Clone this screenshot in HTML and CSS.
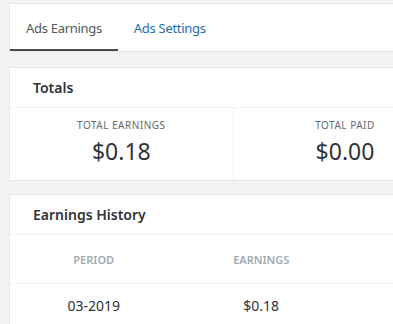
FILE: index.html
```html
<!DOCTYPE html>
<html lang="en">
<head>
    <meta charset="UTF-8">
    <meta name="viewport" content="width=device-width, initial-scale=1.0">
    <title>Ads</title>
    <link rel="stylesheet" href="styles.css">
</head>
<body>
    <div class="page">
        <nav class="tabs">
            <a class="tab is-selected" href="#">Ads Earnings</a>
            <a class="tab" href="#">Ads Settings</a>
        </nav>

        <section class="card">
            <header class="card-header">Totals</header>
            <div class="totals">
                <div class="total">
                    <div class="total-label">Total Earnings</div>
                    <div class="total-value">$0.18</div>
                </div>
                <div class="total">
                    <div class="total-label">Total Paid</div>
                    <div class="total-value">$0.00</div>
                </div>
                <div class="total"></div>
            </div>
        </section>

        <section class="card">
            <header class="card-header">Earnings History</header>
            <table class="history">
                <thead>
                    <tr>
                        <th>Period</th>
                        <th>Earnings</th>
                        <th></th>
                        <th></th>
                    </tr>
                </thead>
                <tbody>
                    <tr>
                        <td>03-2019</td>
                        <td>$0.18</td>
                        <td></td>
                        <td></td>
                    </tr>
                </tbody>
            </table>
        </section>
    </div>
</body>
</html>
```

FILE: styles.css
```css
html, body {
    overflow: hidden;
}
body {
    margin: 0;
    background: #f3f3f3;
    font-family: "Noto Sans", "Open Sans", sans-serif;
    color: #2e3338;
}
.page {
    width: 672px;
    padding: 3px 0 0 9px;
}
.tabs {
    display: flex;
    height: 47px;
    background: #fff;
    border: 1px solid #e6e6e6;
    margin-bottom: 15px;
}
.tab {
    display: flex;
    align-items: center;
    padding: 3px 16px 0;
    font-size: 13px;
    letter-spacing: -0.3px;
    color: #1f6ea8;
    text-decoration: none;
    border-bottom: 2px solid transparent;
}
.tab.is-selected {
    color: #50575e;
    border-bottom-color: #46494d;
}
.card {
    background: #fff;
    border: 1px solid #e6e6e6;
    margin-bottom: 13px;
}
.card-header {
    height: 39px;
    line-height: 40px;
    padding: 0 23px;
    font-size: 14px;
    font-weight: 600;
    border-bottom: 1px solid #f2f2f2;
}
.totals {
    display: flex;
    height: 72px;
}
.total {
    flex: 1;
    text-align: center;
    padding-top: 10px;
}
.total + .total {
    border-left: 1px solid #f2f2f2;
}
.total-label {
    font-size: 10px;
    letter-spacing: 0.05em;
    text-transform: uppercase;
    color: #646970;
}
.total-value {
    font-size: 23px;
    line-height: 38px;
    color: #2e3338;
}
.history {
    width: 100%;
    border-collapse: collapse;
    table-layout: fixed;
}
.history th {
    height: 48px;
    padding: 0;
    font-size: 11px;
    font-weight: 600;
    text-transform: uppercase;
    color: #a2aab1;
    border-bottom: 1px solid #f2f2f2;
    text-align: center;
}
.history td {
    height: 42px;
    padding: 0;
    font-size: 14px;
    text-align: center;
    color: #2e3338;
}
```
